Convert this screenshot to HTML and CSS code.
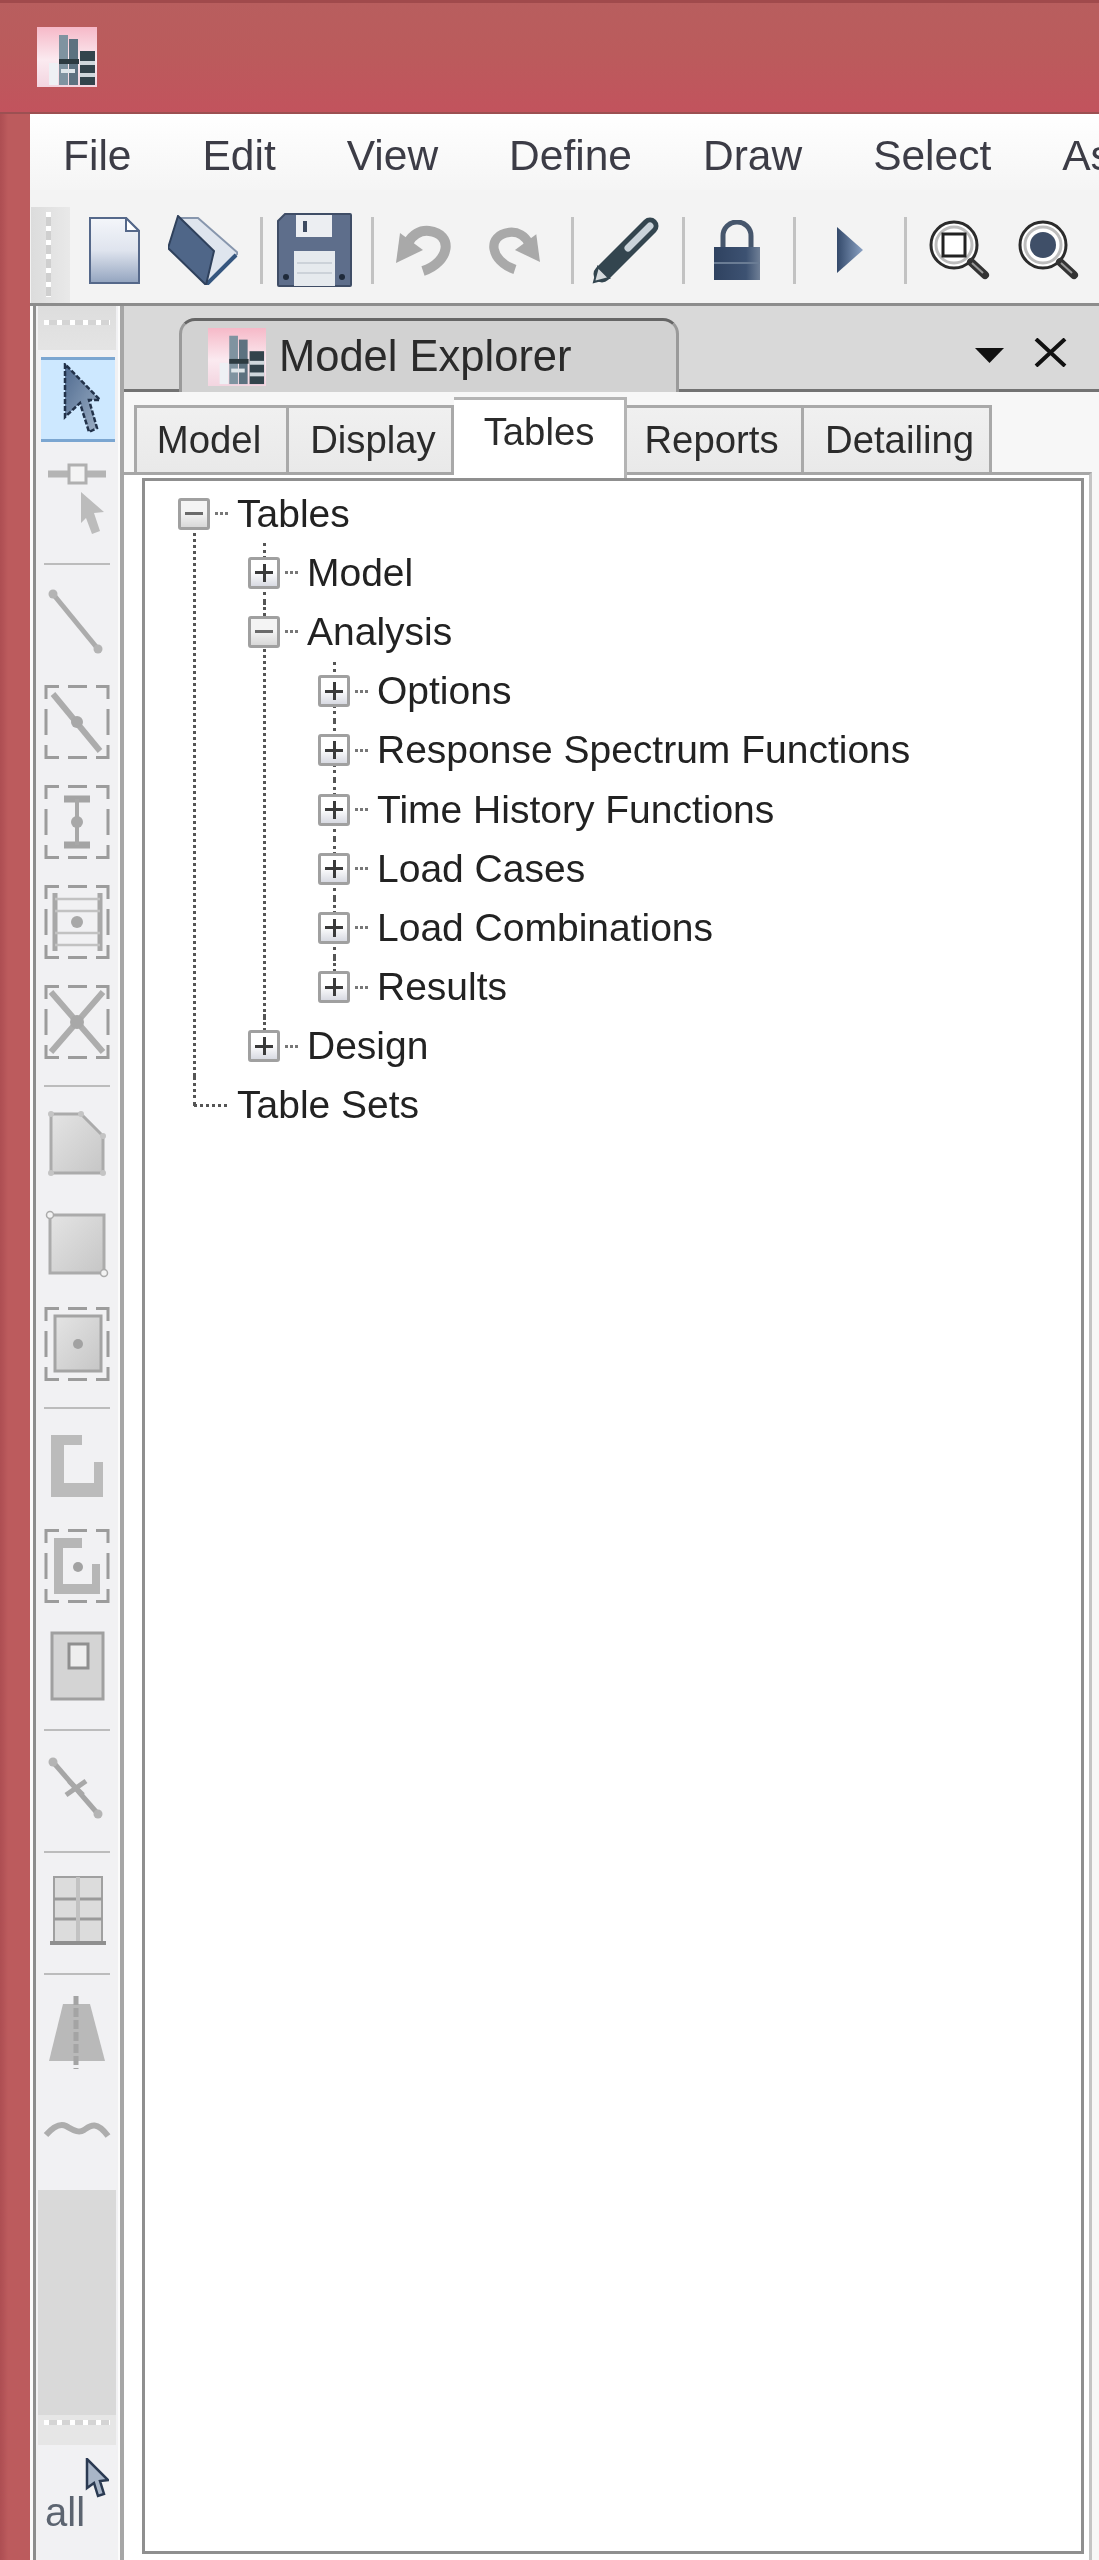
FILE: index.html
```html
<!DOCTYPE html>
<html lang="en">
<head>
<meta charset="utf-8">
<title>Model Explorer</title>
<link rel="stylesheet" href="styles.css">
</head>
<body>
<svg class="defs" width="0" height="0" aria-hidden="true">
  <defs>
    <linearGradient id="gDoc" x1="0" y1="0" x2="0" y2="1"><stop offset="0" stop-color="#f4f6fa"/><stop offset=".5" stop-color="#dfe4ee"/><stop offset="1" stop-color="#93a4bf"/></linearGradient>
    <linearGradient id="gLock" x1="0" y1="0" x2="1" y2="0"><stop offset="0" stop-color="#2f4260"/><stop offset=".7" stop-color="#3d5272"/><stop offset="1" stop-color="#6f7f96"/></linearGradient>
    <linearGradient id="gPlay" x1="0" y1="0" x2="1" y2="0"><stop offset="0" stop-color="#33496a"/><stop offset="1" stop-color="#8ba2c4"/></linearGradient>
    <linearGradient id="gArrow" x1="0" y1="0" x2="1" y2="1"><stop offset="0" stop-color="#4f6a8f"/><stop offset="1" stop-color="#9db0c6"/></linearGradient>
    <linearGradient id="gFill" x1="0" y1="0" x2="1" y2="1"><stop offset="0" stop-color="#e4e4e4"/><stop offset="1" stop-color="#c6c6c6"/></linearGradient>
    <linearGradient id="gPink" x1="0" y1="0" x2="0" y2="1"><stop offset="0" stop-color="#f6b9c8"/><stop offset=".55" stop-color="#fbeaf0"/><stop offset="1" stop-color="#f3d5e0"/></linearGradient>
    <symbol id="logo" viewBox="0 0 60 60">
      <rect width="60" height="60" fill="url(#gPink)"/>
      <rect x="22" y="8" width="9" height="50" fill="#7f93a0"/>
      <rect x="32" y="12" width="9" height="46" fill="#5d7280"/>
      <rect x="43" y="24" width="15" height="34" fill="#33444c"/>
      <rect x="22" y="32" width="20" height="5" fill="#2c3a40"/>
      <rect x="12" y="36" width="9" height="22" fill="#eef0f4"/>
      <rect x="24" y="42" width="14" height="4" fill="#dfe6ea"/>
      <rect x="43" y="34" width="15" height="4" fill="#cfd7dc"/>
      <rect x="43" y="46" width="15" height="4" fill="#cfd7dc"/>
    </symbol>
    <symbol id="frame" viewBox="0 0 74 74">
      <path d="M6 14V1.500H19M28 1.500H47M56 1.500H68V14M68 24V50M68 60V72.500H56M47 72.500H28M19 72.500H6V60M6 50V24" fill="none" stroke="#9c9c9c" stroke-width="3"/>
    </symbol>
  </defs>
</svg>

<div class="app">
  <header class="titlebar">
    <svg class="app-logo"><use href="#logo"/></svg>
  </header>

  <div class="client">
    <nav class="menubar">
      <span>File</span><span>Edit</span><span>View</span><span>Define</span><span>Draw</span><span>Select</span><span>Assign</span>
    </nav>

    <div class="toolbar">
      <div class="grip-v"></div>
      <svg class="tb-doc" viewBox="0 0 51 67"><path d="M1 1H37L50 14V66H1Z" fill="url(#gDoc)" stroke="#55688a" stroke-width="2"/><path d="M37 1V14H50Z" fill="#fff" stroke="#55688a" stroke-width="2"/></svg>
      <svg class="tb-open" viewBox="0 0 70 70"><path d="M30 3L70 38L38 70L12 3Z" fill="#dfe5ee" stroke="#8796ad" stroke-width="2"/><path d="M38 70L68 40" stroke="#35567f" stroke-width="4"/><path d="M10 1L46 36L38 70L0 33Z" fill="#4f6688" stroke="#2f415c" stroke-width="2"/></svg>
      <i class="tb-sep sep-a"></i>
      <svg class="tb-save" viewBox="0 0 75 74"><path d="M8 1H73Q74 1 74 2V72Q74 73 73 73H2Q1 73 1 72V8Z" fill="#5e6e8b" stroke="#3f4d66" stroke-width="2"/><rect x="19" y="2" width="36" height="22" fill="#eceef2"/><rect x="26" y="8" width="4" height="11" fill="#3d4a60"/><rect x="17" y="38" width="41" height="35" fill="#e6eaee"/><path d="M20 50H55M20 60H55" stroke="#ccd2d9" stroke-width="2"/><circle cx="9" cy="64" r="3" fill="#1f2a3a"/><circle cx="65" cy="64" r="3" fill="#1f2a3a"/></svg>
      <i class="tb-sep sep-b"></i>
      <svg class="tb-undo" viewBox="0 0 56 52"><path d="M27 47C54 38 58 10 33 7C24 6 16 11 12 19" fill="none" stroke="#a9a9a9" stroke-width="10"/><path d="M0 39L4 9L27 26Z" fill="#a9a9a9"/></svg>
      <svg class="tb-redo" viewBox="0 0 56 52"><g transform="translate(56 0) scale(-1 1)"><path d="M27 47C54 38 58 10 33 7C24 6 16 11 12 19" fill="none" stroke="#a9a9a9" stroke-width="10"/><path d="M0 39L4 9L27 26Z" fill="#a9a9a9"/></g></svg>
      <i class="tb-sep sep-c"></i>
      <svg class="tb-pen" viewBox="0 0 67 67"><path d="M10 57L58 9" stroke="#33454f" stroke-width="17" stroke-linecap="round"/><path d="M36 31L58 9" stroke="#c9d3da" stroke-width="7" stroke-linecap="round"/><path d="M2 65L6 50L17 61Z" fill="#d5dadd" stroke="#33454f" stroke-width="2"/></svg>
      <i class="tb-sep sep-d"></i>
      <svg class="tb-lock" viewBox="0 0 46 60"><path d="M9 28V16A14 14 0 0 1 37 16V28" fill="none" stroke="#46566c" stroke-width="5"/><rect y="27" width="46" height="33" fill="url(#gLock)"/><rect y="42" width="46" height="2" fill="#6a7c94"/></svg>
      <i class="tb-sep sep-e"></i>
      <svg class="tb-play" viewBox="0 0 26 46"><path d="M0 0L26 23L0 46Z" fill="url(#gPlay)"/></svg>
      <i class="tb-sep sep-f"></i>
      <svg class="tb-z1" viewBox="0 0 61 60"><circle cx="25" cy="25" r="23" fill="#fff" stroke="#2b2b2b" stroke-width="3"/><circle cx="25" cy="25" r="18" fill="none" stroke="#bdbdbd" stroke-width="3"/><rect x="14" y="14" width="22" height="22" fill="#fff" stroke="#222" stroke-width="3"/><path d="M42 42L56 55" stroke="#333" stroke-width="8" stroke-linecap="round"/><path d="M43 43L54 53" stroke="#999" stroke-width="2"/></svg>
      <svg class="tb-z2" viewBox="0 0 61 60"><circle cx="25" cy="25" r="23" fill="#fff" stroke="#2b2b2b" stroke-width="3"/><circle cx="25" cy="25" r="18" fill="none" stroke="#bdbdbd" stroke-width="3"/><circle cx="25" cy="25" r="13" fill="#3f4f68"/><path d="M42 42L56 55" stroke="#333" stroke-width="8" stroke-linecap="round"/><path d="M43 43L54 53" stroke="#999" stroke-width="2"/></svg>
    </div>

    <div class="workarea">
      <aside class="side">
        <div class="grip-h"></div>
        <div class="cell-sel">
          <svg class="ti" viewBox="0 0 74 74"><path d="M24 1V54L39 40L48 69L56 65L48 37H59Z" fill="url(#gArrow)" stroke="#22324a" stroke-width="2.500" stroke-dasharray="5 2"/></svg>
        </div>
        <div class="cell">
          <svg class="ti" viewBox="0 0 74 74"><path d="M8 11H66" stroke="#b4b4b4" stroke-width="7"/><rect x="29" y="2" width="17" height="18" fill="#f4f4f4" stroke="#b0b0b0" stroke-width="3"/><path d="M41 29L64 49L54 50L60 68L52 71L46 55L41 60Z" fill="#bcbcbc"/></svg>
        </div>
        <i class="hsep"></i>
        <div class="cell">
          <svg class="ti" viewBox="0 0 74 74"><path d="M13 9L58 64" stroke="#acacac" stroke-width="5"/><circle cx="13" cy="9" r="4.500" fill="#b4b4b4"/><circle cx="58" cy="64" r="4.500" fill="#b4b4b4"/></svg>
        </div>
        <div class="cell">
          <svg class="ti" viewBox="0 0 74 74"><use href="#frame"/><path d="M13 9L60 66" stroke="#acacac" stroke-width="6"/><circle cx="37" cy="37" r="6" fill="#a8a8a8"/></svg>
        </div>
        <div class="cell">
          <svg class="ti" viewBox="0 0 74 74"><use href="#frame"/><path d="M24 14H50M24 60H50" stroke="#a4a4a4" stroke-width="7"/><path d="M37 14V60" stroke="#a8a8a8" stroke-width="4"/><circle cx="37" cy="37" r="6" fill="#a8a8a8"/></svg>
        </div>
        <div class="cell">
          <svg class="ti" viewBox="0 0 74 74"><use href="#frame"/><path d="M15 8V66M60 8V66" stroke="#a8a8a8" stroke-width="5"/><path d="M15 14H60M15 26H60M15 48H60M15 60H60" stroke="#c2c2c2" stroke-width="2.500"/><circle cx="37" cy="37" r="6" fill="#a8a8a8"/></svg>
        </div>
        <div class="cell">
          <svg class="ti" viewBox="0 0 74 74"><use href="#frame"/><path d="M11 7L63 67M63 7L11 67" stroke="#adadad" stroke-width="6"/><circle cx="37" cy="37" r="7" fill="#a8a8a8"/></svg>
        </div>
        <i class="hsep"></i>
        <div class="cell">
          <svg class="ti" viewBox="0 0 74 74"><path d="M11 7H41L63 29V66H11Z" fill="url(#gFill)" stroke="#ababab" stroke-width="3"/><circle cx="11" cy="7" r="3" fill="#c4c4c4"/><circle cx="41" cy="7" r="3" fill="#c4c4c4"/><circle cx="63" cy="29" r="3" fill="#c4c4c4"/><circle cx="11" cy="66" r="3" fill="#c4c4c4"/><circle cx="63" cy="66" r="3" fill="#c4c4c4"/></svg>
        </div>
        <div class="cell">
          <svg class="ti" viewBox="0 0 74 74"><rect x="10" y="8" width="54" height="58" fill="url(#gFill)" stroke="#ababab" stroke-width="3"/><circle cx="10" cy="8" r="3.500" fill="#f3f3f3" stroke="#ababab" stroke-width="1.500"/><circle cx="64" cy="66" r="3.500" fill="#f3f3f3" stroke="#ababab" stroke-width="1.500"/></svg>
        </div>
        <div class="cell">
          <svg class="ti" viewBox="0 0 74 74"><use href="#frame"/><rect x="15" y="9" width="46" height="55" fill="url(#gFill)" stroke="#a4a4a4" stroke-width="3"/><circle cx="38" cy="37" r="5" fill="#a2a2a2"/></svg>
        </div>
        <i class="hsep"></i>
        <div class="cell">
          <svg class="ti" viewBox="0 0 74 74"><path d="M11 6H42V16H24V54H54V33H63V68H11Z" fill="#bbb"/></svg>
        </div>
        <div class="cell">
          <svg class="ti" viewBox="0 0 74 74"><use href="#frame"/><path d="M14 9H42V19H23V55H52V35H60V65H14Z" fill="#b6b6b6"/><circle cx="38" cy="38" r="5" fill="#a2a2a2"/></svg>
        </div>
        <div class="cell">
          <svg class="ti" viewBox="0 0 74 74"><rect x="12" y="4" width="51" height="66" fill="#d4d4d4" stroke="#a0a0a0" stroke-width="3"/><rect x="29" y="15" width="19" height="24" fill="#eeeeee" stroke="#8f8f8f" stroke-width="3"/></svg>
        </div>
        <i class="hsep"></i>
        <div class="cell">
          <svg class="ti" viewBox="0 0 74 74"><path d="M13 11L58 63" stroke="#a6a6a6" stroke-width="5"/><circle cx="13" cy="11" r="4.500" fill="#b4b4b4"/><circle cx="58" cy="63" r="4.500" fill="#b4b4b4"/><path d="M26 44L46 30M29 30L43 44" stroke="#a8a8a8" stroke-width="5"/></svg>
        </div>
        <i class="hsep"></i>
        <div class="cell">
          <svg class="ti" viewBox="0 0 74 74"><rect x="14" y="4" width="48" height="66" fill="#dcdcdc" stroke="#a0a0a0" stroke-width="2"/><path d="M14 26H62M14 46H62" stroke="#9a9a9a" stroke-width="3"/><path d="M38 4V70" stroke="#c2c2c2" stroke-width="4"/><path d="M10 70H66" stroke="#8f8f8f" stroke-width="4"/></svg>
        </div>
        <i class="hsep"></i>
        <div class="cell">
          <svg class="ti" viewBox="0 0 74 74"><path d="M23 9H50L65 66H9Z" fill="#b9b9b9"/><path d="M36 1V74" stroke="#a4a4a4" stroke-width="5" stroke-dasharray="9 3"/></svg>
        </div>
        <div class="cell">
          <svg class="ti" viewBox="0 0 74 74"><path d="M6 40C14 31 20 28 26 31S38 39 44 35S56 25 68 41" fill="none" stroke="#adadad" stroke-width="6"/></svg>
        </div>
        <div class="side-fill"></div>
        <div class="grip-b"></div>
        <div class="all">
          <span>all</span>
          <svg class="all-arrow" viewBox="0 0 24 42"><path d="M2 1V30L9 25L13 38L19 36L15 23L23 22Z" fill="#a9b6c8" stroke="#2b3a52" stroke-width="2.500"/></svg>
        </div>
      </aside>

      <section class="panel">
        <div class="panel-head">
          <div class="doc-tab">
            <svg class="doc-logo"><use href="#logo"/></svg>
            <span>Model Explorer</span>
          </div>
          <div class="panel-ctrl">
            <svg class="ctrl-menu" viewBox="0 0 29 15"><path d="M0 0H29L14.500 15Z" fill="#111"/></svg>
            <svg class="ctrl-close" viewBox="0 0 33 29"><path d="M2 1L31 28M31 1L2 28" stroke="#111" stroke-width="4"/></svg>
          </div>
        </div>

        <div class="tabstrip">
          <span class="tab w-model">Model</span>
          <span class="tab w-display">Display</span>
          <span class="tab active">Tables</span>
          <span class="tab w-reports">Reports</span>
          <span class="tab w-detail">Detailing</span>
        </div>

        <div class="pane">
          <div class="treebox">
            <ul class="tree">
              <li class="root">
                <div class="row"><i class="box minus"></i><i class="dash"></i><span>Tables</span></div>
                <ul>
                  <li><div class="row"><i class="box plus"></i><i class="dash"></i><span>Model</span></div></li>
                  <li>
                    <div class="row"><i class="box minus"></i><i class="dash"></i><span>Analysis</span></div>
                    <ul>
                      <li><div class="row"><i class="box plus"></i><i class="dash"></i><span>Options</span></div></li>
                      <li><div class="row"><i class="box plus"></i><i class="dash"></i><span>Response Spectrum Functions</span></div></li>
                      <li><div class="row"><i class="box plus"></i><i class="dash"></i><span>Time History Functions</span></div></li>
                      <li><div class="row"><i class="box plus"></i><i class="dash"></i><span>Load Cases</span></div></li>
                      <li><div class="row"><i class="box plus"></i><i class="dash"></i><span>Load Combinations</span></div></li>
                      <li><div class="row"><i class="box plus"></i><i class="dash"></i><span>Results</span></div></li>
                    </ul>
                  </li>
                  <li><div class="row"><i class="box plus"></i><i class="dash"></i><span>Design</span></div></li>
                </ul>
              </li>
              <li class="leaf"><div class="row"><i class="dash long"></i><span>Table Sets</span></div></li>
            </ul>
          </div>
        </div>
      </section>
    </div>
  </div>
</div>
</body>
</html>
```

FILE: styles.css
```css
* { box-sizing: border-box; }

html, body {
  margin: 0;
  width: 1099px;
  height: 2560px;
  overflow: hidden;
  background: #bb5a5c;
}

.defs { position: absolute; }

.app {
  width: 1099px;
  height: 2560px;
  display: flex;
  flex-direction: column;
  overflow: hidden;
  font-family: "Liberation Sans", Arial, sans-serif;
  color: #222;
  background: linear-gradient(90deg, #ad4e52 0, #b25256 3px, #bc5b5d 8px);
  filter: blur(.7px);
}

.titlebar {
  height: 114px;
  flex: none;
  padding: 24px 0 0 37px;
  border-top: 3px solid #a04a4c;
  border-bottom: 2px solid #9c5052;
  background: linear-gradient(#b85e5e, #bb5b5c 45%, #c2535d);
}

.app-logo { display: block; width: 60px; height: 60px; }

.client {
  flex: 1;
  min-height: 0;
  margin-left: 30px;
  display: flex;
  flex-direction: column;
  background: #f4f4f4;
}

.menubar {
  height: 76px;
  flex: none;
  display: flex;
  align-items: center;
  gap: 71px;
  padding: 8px 0 0 33px;
  font-size: 42.500px;
  color: #3c3c46;
  white-space: nowrap;
  overflow: hidden;
  background: linear-gradient(#fff, #f5f5f5);
}

.toolbar {
  height: 116px;
  flex: none;
  display: flex;
  align-items: center;
  padding-top: 7px;
  border-bottom: 3px solid #8c8c8c;
  background: #f3f3f3;
  overflow: hidden;
}

.toolbar svg { flex: none; display: block; }

.grip-v {
  flex: none;
  width: 39px;
  height: 97px;
  margin: 10px 0 0 1px;
  background:
    repeating-linear-gradient(#fff 0 5px, #cfcfcf 5px 14px) 15px 5px / 5px 85px no-repeat,
    linear-gradient(90deg, #dcdcdc, #e9e9e9);
}

.tb-sep {
  flex: none;
  width: 3px;
  height: 67px;
  background: #c2c2c2;
}

.tb-doc { width: 51px; height: 67px; margin-left: 19px; }
.tb-open { width: 70px; height: 70px; margin-left: 28px; }
.sep-a { margin-left: 22px; }
.tb-save { width: 75px; height: 74px; margin-left: 14px; }
.sep-b { margin-left: 19px; }
.tb-undo { width: 56px; height: 52px; margin-left: 22px; }
.tb-redo { width: 52px; height: 52px; margin-left: 36px; }
.sep-c { margin-left: 31px; }
.tb-pen { width: 67px; height: 67px; margin-left: 18px; }
.sep-d { margin-left: 23px; }
.tb-lock { width: 46px; height: 60px; margin-left: 29px; }
.sep-e { margin-left: 33px; }
.tb-play { width: 26px; height: 46px; margin-left: 41px; }
.sep-f { margin-left: 41px; }
.tb-z1 { width: 61px; height: 60px; margin-left: 22px; }
.tb-z2 { width: 61px; height: 60px; margin-left: 28px; }

.workarea {
  flex: 1;
  min-height: 0;
  display: flex;
  background: #fbfbfb;
}

.side {
  flex: none;
  width: 85px;
  margin-left: 3px;
  display: flex;
  flex-direction: column;
  border-left: 3px solid #8d8d8d;
  background: #f1f1f3;
}

.grip-h {
  flex: none;
  height: 44px;
  margin: 0 2px 0 2px;
  padding-top: 3px;
  background:
    repeating-linear-gradient(90deg, #fff 0 5px, #d4d4d4 5px 13px) 6px 14px / 66px 5px no-repeat,
    linear-gradient(#ddd, #e4e4e4);
}

.cell {
  flex: none;
  height: 100px;
  display: flex;
  align-items: center;
  justify-content: center;
}

.cell-sel {
  flex: none;
  height: 85px;
  margin: 7px 3px 8px 5px;
  display: flex;
  align-items: center;
  justify-content: center;
  border-top: 3px solid #7ba6d1;
  border-bottom: 3px solid #7ba6d1;
  background: #cde8ff;
}

.ti { display: block; width: 74px; height: 74px; flex: none; }

.hsep {
  flex: none;
  display: block;
  height: 2px;
  margin: 13px 8px 7px;
  background: #bcbcbc;
}

.side-fill {
  flex: none;
  height: 225px;
  margin: 8px 2px 0 2px;
  background: #d9d9d9;
}

.grip-b {
  flex: none;
  height: 30px;
  margin: 0 2px;
  background:
    repeating-linear-gradient(90deg, #fff 0 5px, #d4d4d4 5px 13px) 6px 5px / 66px 5px no-repeat,
    #e6e6e6;
}

.all {
  flex: 1;
  display: flex;
  align-items: flex-start;
  padding: 45px 0 0 9px;
  font-size: 40px;
  line-height: 44px;
  color: #5c6470;
}

.all-arrow {
  flex: none;
  width: 24px;
  height: 42px;
  margin: -32px 0 0 0;
}

.panel {
  flex: 1;
  min-width: 0;
  margin-left: 2px;
  display: flex;
  flex-direction: column;
  border-left: 4px solid #a6a6a6;
  background: #f7f7f7;
}

.panel-head {
  flex: none;
  height: 86px;
  display: flex;
  align-items: flex-end;
  padding-left: 55px;
  border-bottom: 3px solid #737373;
  background: #d9d9d9;
}

.doc-tab {
  flex: none;
  width: 500px;
  height: 74px;
  margin-bottom: -3px;
  display: flex;
  align-items: center;
  gap: 12px;
  padding-left: 25px;
  font-size: 43.500px;
  color: #2a2a2a;
  white-space: nowrap;
  border: 3px solid #9a9a9a;
  border-top-color: #666;
  border-bottom: 0;
  border-radius: 16px 16px 0 0;
  background: #d2d2d2;
}

.doc-logo { display: block; flex: none; width: 60px; height: 58px; }

.panel-ctrl {
  margin-left: auto;
  align-self: center;
  display: flex;
  align-items: center;
  gap: 30px;
  padding: 10px 32px 0 0;
}

.ctrl-menu { display: block; width: 29px; height: 15px; margin-top: 6px; }
.ctrl-close { display: block; width: 33px; height: 29px; }

.tabstrip {
  flex: none;
  height: 80px;
  display: flex;
  align-items: flex-end;
  padding-left: 10px;
  position: relative;
  z-index: 1;
}

.tab {
  flex: none;
  height: 67px;
  display: flex;
  align-items: center;
  justify-content: center;
  font-size: 38.300px;
  color: #2b2b2b;
  border: 3px solid #a9a9a9;
  border-bottom: 0;
  border-left-width: 0;
  background: linear-gradient(#f0f0f0, #e9e9e9);
}

.w-model { width: 155px; padding-right: 5px; border-left-width: 3px; }
.w-display { width: 165px; padding-left: 6px; }
.w-reports { width: 177px; padding-right: 5px; }
.w-detail { width: 188px; padding-left: 6px; }

.tab.active {
  width: 173px;
  height: 81px;
  margin-bottom: -6px;
  padding-bottom: 14px;
  border-color: #b4b4b4;
  border-left-width: 0;
  background: #fff;
}

.pane {
  flex: 1;
  min-height: 0;
  display: flex;
  flex-direction: column;
  margin-right: 7px;
  padding: 3px 5px 6px 18px;
  border-top: 3px solid #a6a6a6;
  border-right: 3px solid #c4c4c4;
  background: #fff;
}

.treebox {
  flex: 1;
  border: 3px solid #8f8f8f;
  background: #fff;
  overflow: hidden;
}

.tree, .tree ul {
  list-style: none;
  margin: 0;
  padding: 0;
}

.tree { padding: 3px 0 0 33px; }
.tree ul { margin-left: 70px; }

.tree li { position: relative; }

.tree li::before {
  content: "";
  position: absolute;
  left: 15px;
  top: 0;
  bottom: 0;
  border-left: 3px dotted #555;
}

.tree li:last-child::before { bottom: auto; height: 14px; }
.tree li.root::before { top: 30px; }
.tree li.leaf:last-child::before { height: 30px; }

.row {
  height: 59.200px;
  display: flex;
  align-items: center;
  font-size: 39px;
  color: #222;
  white-space: nowrap;
}

.box {
  flex: none;
  display: block;
  position: relative;
  z-index: 1;
  width: 32px;
  height: 32px;
  border: 3px solid #a0a0a0;
  border-radius: 3px;
}

.box.plus {
  background:
    linear-gradient(#3a3a3a, #3a3a3a) center / 18px 3px no-repeat,
    linear-gradient(#3a3a3a, #3a3a3a) center / 3px 18px no-repeat,
    linear-gradient(#fff 45%, #d8dae2);
}

.box.minus {
  background:
    linear-gradient(#6a6a6a, #6a6a6a) center / 18px 3px no-repeat,
    linear-gradient(#f4f4f4 45%, #d8d8d8);
}

.dash {
  flex: none;
  display: block;
  width: 13px;
  height: 0;
  margin: 0 9px 0 5px;
  border-top: 3px dotted #777;
}

.dash.long {
  width: 33px;
  margin: 0 10px 0 16px;
  border-top-color: #555;
}
```
